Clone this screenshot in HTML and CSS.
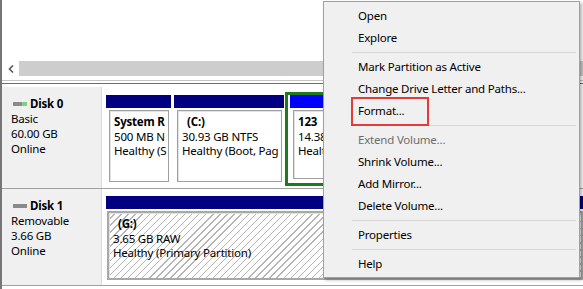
FILE: index.html
```html
<!DOCTYPE html>
<html lang="en">
<head>
  <meta charset="UTF-8">
  <title>Disk Management</title>
  <link rel="stylesheet" href="styles.css">
</head>
<body>

  <div id="janela">

    <!-- lista de volumes (rolada) -->
    <div id="lista">
      <div id="rolagem">
        <span class="seta">
          <svg width="6" height="8" viewBox="0 0 6 8"><polyline points="5,0.5 1.5,4 5,7.5" fill="none" stroke="#5a5a5a" stroke-width="1.6"/></svg>
        </span>
        <div class="trilho"></div>
      </div>
      <div class="rodape"></div>
    </div>

    <!-- Disk 0 -->
    <div class="disco disco0">
      <div class="rotulo">
        <div class="nome"><span class="drive ligado"></span>Disk 0</div>
        <div>Basic</div>
        <div>60.00 GB</div>
        <div>Online</div>
      </div>
      <div class="particoes">
        <div class="part sistema">
          <div class="barra"></div>
          <div class="caixa">
            <div class="titulo">System R</div>
            <div>500 MB N</div>
            <div>Healthy (S</div>
          </div>
        </div>
        <div class="part unidadeC">
          <div class="barra"></div>
          <div class="caixa">
            <div class="titulo letra">(C:)</div>
            <div>30.93 GB NTFS</div>
            <div>Healthy (Boot, Pag</div>
          </div>
        </div>
        <div class="part selecionada">
          <div class="barra logica"></div>
          <div class="caixa">
            <div class="titulo">123</div>
            <div>14.38</div>
            <div>Healt</div>
          </div>
        </div>
      </div>
    </div>

    <!-- Disk 1 -->
    <div class="disco disco1">
      <div class="rotulo">
        <div class="nome"><span class="drive"></span>Disk 1</div>
        <div>Removable</div>
        <div>3.66 GB</div>
        <div>Online</div>
      </div>
      <div class="particoes">
        <div class="part inteira">
          <div class="barra"></div>
          <div class="caixa hachurada">
            <div class="titulo letra">(G:)</div>
            <div>3.65 GB RAW</div>
            <div>Healthy (Primary Partition)</div>
          </div>
        </div>
      </div>
    </div>

    <!-- menu de contexto -->
    <div id="menu">
      <div class="item">Open</div>
      <div class="item">Explore</div>
      <div class="separador"></div>
      <div class="item">Mark Partition as Active</div>
      <div class="item">Change Drive Letter and Paths...</div>
      <div class="item destaque">Format...</div>
      <div class="separador"></div>
      <div class="item desativado">Extend Volume...</div>
      <div class="item">Shrink Volume...</div>
      <div class="item">Add Mirror...</div>
      <div class="item">Delete Volume...</div>
      <div class="separador"></div>
      <div class="item">Properties</div>
      <div class="separador"></div>
      <div class="item">Help</div>
    </div>

  </div>

</body>
</html>
```

FILE: styles.css
```css
body {
  margin: 0;
  padding: 0;
  background: #ffffff;
  font-family: "Noto Sans", "Open Sans", sans-serif;
  font-size: 11.5px;
  letter-spacing: -0.2px;
  color: #000000;
  overflow: hidden;
}

#janela {
  position: relative;
  width: 583px;
  height: 289px;
  border-left: 2px solid #767676;
  box-sizing: border-box;
  overflow: hidden;
}

/* parte de cima: lista rolada */
#lista {
  height: 84px;
  padding-top: 61px;
  box-sizing: border-box;
  border-bottom: 1px solid #6e6e6e;
}

#rolagem {
  display: flex;
  height: 15px;
}

.seta {
  width: 17px;
  display: flex;
  align-items: center;
  justify-content: center;
}

.trilho {
  flex: 1;
  background: #cdcdcd;
}

.rodape {
  margin-top: 4px;
  border-top: 1px solid #c4c4c4;
}

/* linhas dos discos */
.disco {
  display: flex;
  border-bottom: 1px solid #a0a0a0;
}

.disco0 {
  height: 101px;
  margin-top: 3px;
}

.disco0 .particoes {
  padding-bottom: 2px;
}

.disco1 {
  height: 96px;
}

.rotulo {
  width: 100px;
  background: #f0f0f0;
  border-right: 1px solid #d9d9d9;
  padding: 9px 0 0 9px;
  box-sizing: border-box;
  line-height: 15px;
}

.nome {
  font-weight: bold;
  display: flex;
  align-items: center;
}

.drive {
  width: 14px;
  height: 4px;
  margin: 0 3px 0 2px;
  background: #8a8a8a;
}

.drive.ligado {
  background: linear-gradient(to right, #8a8a8a 0 9px, #7fd07f 9px);
}

.particoes {
  flex: 1;
  display: flex;
  padding: 5px 0 0 4px;
  min-width: 0;
}

.part {
  display: flex;
  flex-direction: column;
  padding-top: 3px;
}

.barra {
  height: 13px;
  background: #000080;
}

.barra.logica {
  background: #0000ff;
}

.caixa {
  flex: 1;
  margin: 2px 2px 4px 3px;
  padding: 4px 0 0 4px;
  border: 1px solid #a0a0a0;
  box-shadow: inset 1px 1px 0 #e2e2e2;
  background: #ffffff;
  line-height: 14.5px;
  white-space: nowrap;
  overflow: hidden;
}

.titulo {
  font-weight: bold;
}

.letra {
  padding-left: 5px;
}

.sistema {
  width: 65px;
  margin-right: 3px;
}

.unidadeC {
  width: 110px;
  margin-right: 1px;
}

.selecionada {
  width: 200px;
  padding: 0 2px 0 2px;
  border: 3px solid #1f7a1f;
}

.inteira {
  flex: 1;
  padding-top: 2px;
}

.hachurada {
  border: 2px solid #a8a8a8;
  margin: 2px 0 5px 1px;
  background: repeating-linear-gradient(135deg, #ffffff 0 4px, #b4b4b4 4px 5px);
}

/* menu de contexto */
#menu {
  position: absolute;
  left: 321px;
  top: 1px;
  width: 257px;
  padding: 3px 2px 2px 2px;
  background: #f0f0f0;
  border: 1px solid #a0a0a0;
  box-sizing: border-box;
  box-shadow: 2px 2px 3px rgba(0, 0, 0, 0.3);
}

.item {
  height: 22px;
  line-height: 22px;
  padding-left: 32px;
  white-space: nowrap;
}

.desativado {
  color: #6d6d6d;
}

.separador {
  height: 1px;
  margin: 3px 1px 3px 26px;
  background: #d7d7d7;
}

.destaque {
  position: relative;
}

.destaque::after {
  content: "";
  position: absolute;
  left: 25px;
  top: -3px;
  width: 78px;
  height: 29px;
  border: 2px solid #e23b3b;
  box-sizing: border-box;
}
```
